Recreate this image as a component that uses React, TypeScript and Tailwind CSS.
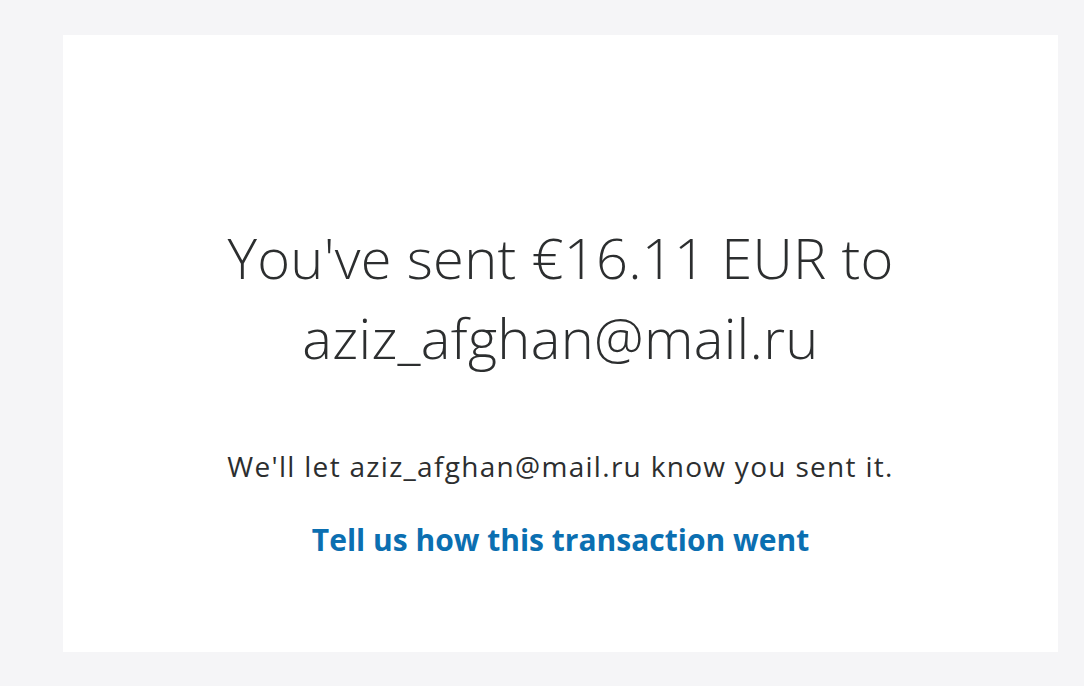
import React from 'react';

const App = () => {
  return (
    <div className="min-h-screen w-full bg-[#f5f5f7] pt-[35px] pl-[63px] pr-[26px] pb-[34px] font-['Open_Sans','Lato',sans-serif]">
      <div className="h-[617px] bg-white flex flex-col items-center pt-[182px]">
        <h1 className="text-center font-light text-[#2c2e2f] text-[56px] leading-[80px] tracking-[0.3px]">
          You've sent €16.11 EUR to
          <br />
          aziz_afghan@mail.ru
        </h1>
        <p className="mt-[72px] text-[28px] leading-[34px] tracking-[1.3px] text-[#2c2e2f]">
          We'll let aziz_afghan@mail.ru know you sent it.
        </p>
        <a href="#" className="mt-[38px] text-[30px] leading-[38px] font-bold text-[#0b6fb1]">
          Tell us how this transaction went
        </a>
      </div>
    </div>
  );
};

export default App;
